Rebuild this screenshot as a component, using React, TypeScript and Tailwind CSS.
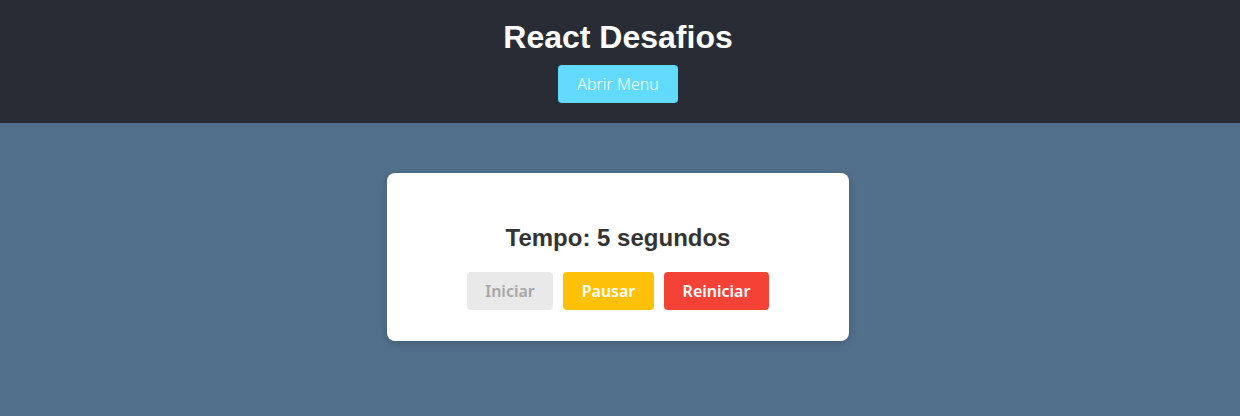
const btnFont = { fontFamily: '"Noto Sans", "Open Sans", sans-serif' };

const TimerButton = (props: { label: string; className: string; disabled?: boolean }) => (
  <button
    disabled={props.disabled}
    className={`h-[38px] rounded-[4px] text-[16px] font-semibold ${props.className}`}
    style={btnFont}
  >
    {props.label}
  </button>
);

export default function App() {
  return (
    <div className="flex h-[416px] w-full flex-col bg-[#52708c]">
      <header className="flex h-[123px] flex-col items-center bg-[#282c34] pr-[4px] pt-[19px]">
        <h1 className="font-['Liberation_Sans',Arial,sans-serif] text-[32px] font-bold leading-[37px] text-white">
          React Desafios
        </h1>
        <button
          className="mt-[9px] h-[38px] w-[120px] rounded-[4px] bg-[#61dafb] text-[16px] font-light text-white"
          style={btnFont}
        >
          Abrir Menu
        </button>
      </header>
      <main className="flex justify-center pr-[4px] pt-[50px]">
        <div className="flex h-[168px] w-[462px] flex-col items-center rounded-[8px] bg-white pt-[51px] shadow-[0_2px_8px_rgba(0,0,0,0.2)]">
          <h2 className="font-['Liberation_Sans',Arial,sans-serif] text-[24px] font-bold leading-[28px] text-[#333333]">
            Tempo: 5 segundos
          </h2>
          <div className="mt-[20px] flex gap-[10px]">
            <TimerButton label="Iniciar" disabled className="w-[86px] bg-[#e9e9e9] text-[#a6a6a6]" />
            <TimerButton label="Pausar" className="w-[91px] bg-[#ffc107] text-white" />
            <TimerButton label="Reiniciar" className="w-[105px] bg-[#f44336] text-white" />
          </div>
        </div>
      </main>
    </div>
  );
}
